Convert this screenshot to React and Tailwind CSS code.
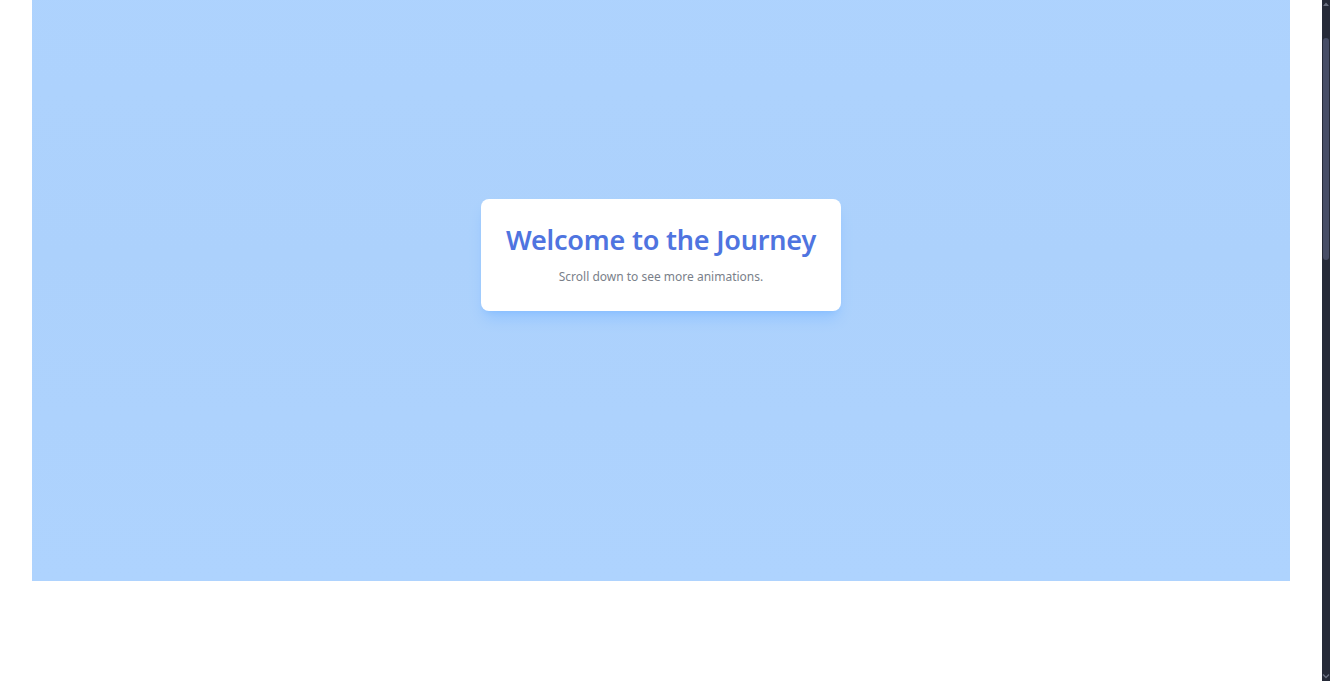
import { useEffect, useRef } from "react";

export default function App() {
  const scroller = useRef(null);

  // the reference is captured a little way down the page
  useEffect(() => {
    if (scroller.current) scroller.current.scrollTop = 74;
  }, []);

  return (
    <div className="flex h-[681px] w-full bg-white" style={{ fontFamily: '"Noto Sans", "Open Sans", sans-serif' }}>
      <div ref={scroller} className="h-full flex-1 overflow-y-scroll [scrollbar-width:none]">
        {/* Hero */}
        <section className="mx-8 flex h-[655px] items-center justify-center bg-gradient-to-b from-[#aed3fe] via-[#acd1fc] to-[#aed3fe] pt-[3px]">
          <div className="flex h-[112px] w-[360px] flex-col items-center rounded-lg bg-white pt-[23px] shadow-lg shadow-blue-400/30">
            <h1 className="text-[27px] font-semibold leading-[36px] tracking-[-0.2px] text-[#4f74e0]">
              Welcome to the Journey
            </h1>
            <p className="mt-[10px] text-[12px] leading-[18px] text-[#7a7f8a]">Scroll down to see more animations.</p>
          </div>
        </section>

        <div className="h-[1348px]" />
      </div>

      {/* Scrollbar */}
      <div className="flex w-2 flex-col items-center bg-[#262a38]">
        <svg width="8" height="6" viewBox="0 0 8 6" className="mt-px">
          <path d="M1 5 L4 1.5 L7 5 Z" fill="#6b7080" />
        </svg>
        <div className="mt-[31px] h-[222px] w-[6px] rounded-sm bg-[#474d66]" />
        <div className="flex-1" />
        <svg width="8" height="6" viewBox="0 0 8 6" className="mb-[2px]">
          <path d="M1 1.5 L4 4.5 L7 1.5" fill="none" stroke="#6b7080" strokeWidth="1.4" />
        </svg>
      </div>
    </div>
  );
}
